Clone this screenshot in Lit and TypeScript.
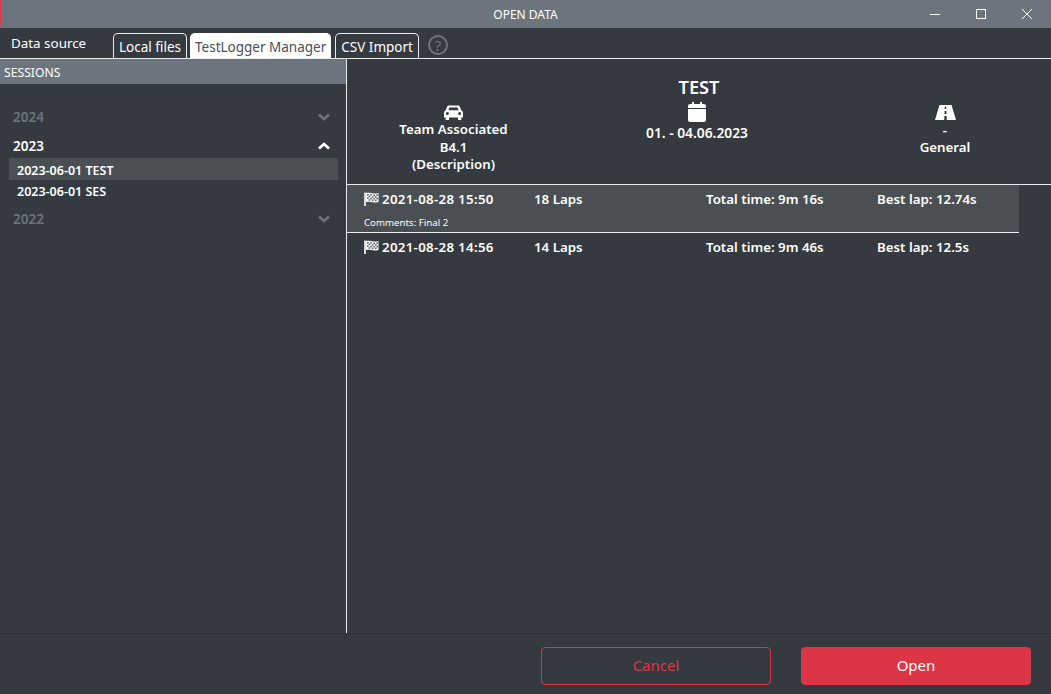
import { LitElement, html, css, svg } from "lit";
import { customElement } from "lit/decorators.js";

const chevDown = svg`<path d="M2 4.5 L7 9 L12 4.5" fill="none" stroke="currentColor" stroke-width="2.6"/>`;
const chevUp = svg`<path d="M2 9.5 L7 5 L12 9.5" fill="none" stroke="currentColor" stroke-width="2.6"/>`;

@customElement("app-root")
export class AppRoot extends LitElement {
  static styles = css`
    :host { display: flex; flex-direction: column; width: 1051px; height: 694px; background: #343a40; color: #fff; font-family: "Noto Sans", "Open Sans", sans-serif; overflow: hidden; position: relative; }
    .title { height: 28px; background: #6c757d; display: flex; align-items: center; justify-content: center; font-size: 12px; position: relative; flex: none; }
    .accent { position: absolute; left: 0; top: 0; width: 1px; height: 26px; background: #dc3545; }
    .winbtns { position: absolute; right: 1px; top: 0; height: 28px; display: flex; }
    .winbtn { width: 46px; height: 28px; display: flex; align-items: center; justify-content: center; }
    .tabs { height: 30px; flex: none; display: flex; align-items: flex-end; border-bottom: 1px solid #e9ecef; box-sizing: content-box; position: relative; }
    .ds { font-size: 13.4px; position: absolute; left: 11px; top: 6px; }
    .tab { height: 25px; box-sizing: border-box; border: 1px solid #e9ecef; border-bottom: none; border-radius: 5px 5px 0 0; font-size: 13.5px; padding: 3px 5px 0; margin-right: 3px; line-height: 20px; white-space: nowrap; }
    .tab.first { margin-left: 113px; }
    .tab.active { background: #fff; color: #495057; border-color: #fff; padding: 3px 4px 0; margin-right: 4px; }
    .help { width: 20px; height: 20px; margin: 0 0 3px 6px; border: 2px solid #6c757d; border-radius: 50%; box-sizing: border-box; color: #6c757d; font-size: 15px; line-height: 16px; text-align: center; }
    .body { flex: 1; display: flex; min-height: 0; }
    .left { width: 346px; flex: none; border-right: 1px solid #e9ecef; display: flex; flex-direction: column; box-sizing: content-box; }
    .sess { height: 25px; background: #6c757d; font-size: 12.2px; line-height: 27px; padding-left: 4px; flex: none; }
    .list { padding: 18px 8px 0 9px; }
    .year { display: flex; justify-content: space-between; align-items: center; font-size: 13.5px; font-weight: 600; height: 29px; padding-left: 4px; padding-right: 7px; }
    .year.dim { color: #6c757d; }
    .item { font-size: 12.5px; font-weight: 600; height: 22px; line-height: 24px; padding-left: 8px; }
    .item.sel { background: #4a4f54; line-height: 26px; }
    .items { margin-top: -2px; margin-bottom: 2px; }
    .right { flex: 1; min-width: 0; }
    .head { height: 125px; border-bottom: 1px solid #e9ecef; display: grid; grid-template-columns: 213px 274px 1fr; box-sizing: content-box; }
    .col { display: flex; flex-direction: column; align-items: center; font-size: 13.3px; font-weight: 600; line-height: 17.5px; text-align: center; }
    .c1 { padding-top: 46px; }
    .c1 .ic { margin-bottom: 0; }
    .c2 { padding-top: 17px; }
    .c2 .ttl { font-size: 18.2px; line-height: 22px; margin-left: 4px; margin-bottom: 4px; }
    .c2 .val { margin-top: 2px; font-size: 13.8px; }
    .c3 { padding-top: 46px; width: 200px; margin-left: 11px; }
    .c3 .dash { line-height: 14px; margin-top: 3px; }
    .c3 .gen { line-height: 18px; margin-top: 1px; }
    .sessions { padding-right: 32px; }
    .run { padding-left: 17px; font-size: 13.3px; font-weight: 600; }
    .run.sel { background: #4a4f54; border-bottom: 1px solid #e9ecef; height: 47px; box-sizing: content-box; }
    .row { display: grid; grid-template-columns: 170px 172px 171px 1fr; height: 28px; align-items: center; }
    .when { display: flex; align-items: center; gap: 3px; letter-spacing: 0.3px; }
    .cm { font-size: 9.7px; font-weight: 400; line-height: 13px; margin-top: 3px; }
    .foot { height: 61px; flex: none; border-top: 1px solid #2c3136; display: flex; justify-content: flex-end; align-items: flex-start; gap: 30px; padding: 13px 20px 0 0; box-sizing: border-box; }
    .btn { width: 230px; height: 38px; padding-bottom: 2px; border-radius: 4px; box-sizing: border-box; font-size: 15px; display: flex; align-items: center; justify-content: center; border: 1px solid #dc3545; }
    .btn.out { color: #dc3545; }
    .btn.solid { background: #dc3545; color: #fff; }
    svg { display: block; }
  `;

  flag() {
    return html`<svg width="15" height="14" viewBox="0 0 15 14"><path d="M1 0.5 V14" stroke="#fff" stroke-width="1.6"/><path d="M2 1 C5 0 8 2.5 14.5 1 V10 C9 11.5 6 9 2 10 Z" fill="#fff"/><g fill="#5b6268"><rect x="3" y="2" width="1.6" height="1.6"/><rect x="6.2" y="2" width="1.6" height="1.6"/><rect x="9.4" y="2.6" width="1.6" height="1.6"/><rect x="12.4" y="2.2" width="1.6" height="1.6"/><rect x="4.6" y="3.7" width="1.6" height="1.6"/><rect x="7.8" y="4.2" width="1.6" height="1.6"/><rect x="11" y="4.2" width="1.6" height="1.6"/><rect x="3" y="5.4" width="1.6" height="1.6"/><rect x="6.2" y="5.8" width="1.6" height="1.6"/><rect x="9.4" y="5.9" width="1.6" height="1.6"/><rect x="12.4" y="5.8" width="1.6" height="1.6"/><rect x="4.6" y="7.2" width="1.6" height="1.6"/><rect x="7.8" y="7.6" width="1.6" height="1.6"/><rect x="11" y="7.6" width="1.6" height="1.6"/></g></svg>`;
  }

  run(when: string, laps: string, total: string, best: string) {
    return html`<div class="row">
      <div class="when">${this.flag()}<span>${when}</span></div>
      <div>${laps}</div><div>${total}</div><div>${best}</div>
    </div>`;
  }

  render() {
    return html`
      <div class="title">
        <div class="accent"></div>
        <span>OPEN DATA</span>
        <div class="winbtns">
          <div class="winbtn"><svg width="10" height="10" viewBox="0 0 10 10"><path d="M0 5.5H10" stroke="#fff"/></svg></div>
          <div class="winbtn"><svg width="10" height="10" viewBox="0 0 10 10"><rect x=".5" y=".5" width="9" height="9" fill="none" stroke="#fff"/></svg></div>
          <div class="winbtn"><svg width="10" height="10" viewBox="0 0 10 10"><path d="M0 0L10 10M10 0L0 10" stroke="#fff" stroke-width="1"/></svg></div>
        </div>
      </div>
      <div class="tabs">
        <div class="ds">Data source</div>
        <div class="tab first">Local files</div>
        <div class="tab active">TestLogger Manager</div>
        <div class="tab">CSV Import</div>
        <div class="help">?</div>
      </div>
      <div class="body">
        <div class="left">
          <div class="sess">SESSIONS</div>
          <div class="list">
            <div class="year dim"><span>2024</span><svg width="14" height="14" viewBox="0 0 14 14">${chevDown}</svg></div>
            <div class="year"><span>2023</span><svg width="14" height="14" viewBox="0 0 14 14">${chevUp}</svg></div>
            <div class="items">
              <div class="item sel">2023-06-01 TEST</div>
              <div class="item">2023-06-01 SES</div>
            </div>
            <div class="year dim"><span>2022</span><svg width="14" height="14" viewBox="0 0 14 14">${chevDown}</svg></div>
          </div>
        </div>
        <div class="right">
          <div class="head">
            <div class="col c1">
              <svg class="ic" width="19" height="16" viewBox="0 0 19 16"><path fill="#fff" fill-rule="evenodd" d="M5 0.5 H14 C15 0.5 15.6 1 16 2 L17.2 5.3 C18.3 5.8 19 6.7 19 8 V12.5 H17.3 V15 H14 V12.5 H5 V15 H1.7 V12.5 H0 V8 C0 6.7 0.7 5.8 1.8 5.3 L3 2 C3.4 1 4 0.5 5 0.5 Z M5.4 2.6 L4.4 5.2 H14.6 L13.6 2.6 Z M3.4 7 A1.5 1.5 0 1 0 3.4 10 A1.5 1.5 0 1 0 3.4 7 Z M15.6 7 A1.5 1.5 0 1 0 15.6 10 A1.5 1.5 0 1 0 15.6 7 Z"/></svg>
              <div>Team Associated</div><div>B4.1</div><div>(Description)</div>
            </div>
            <div class="col c2">
              <div class="ttl">TEST</div>
              <svg width="18" height="20" viewBox="0 0 18 20"><path fill="#fff" d="M4 0 H6 V2 H12 V0 H14 V2 H16 A2 2 0 0 1 18 4 V6 H0 V4 A2 2 0 0 1 2 2 H4 Z M0 7 H18 V18 A2 2 0 0 1 16 20 H2 A2 2 0 0 1 0 18 Z"/></svg>
              <div class="val">01. - 04.06.2023</div>
            </div>
            <div class="col c3">
              <svg width="21" height="15" viewBox="0 0 21 15"><path fill="#fff" fill-rule="evenodd" d="M4.5 0 H16.5 L21 15 H0 Z M9.8 1.5 L9.7 4 H11.3 L11.2 1.5 Z M9.6 6 L9.5 9 H11.5 L11.4 6 Z M9.4 11 L9.2 15 H11.8 L11.6 11 Z"/></svg>
              <div class="dash">-</div>
              <div class="gen">General</div>
            </div>
          </div>
          <div class="sessions">
            <div class="run sel">
              ${this.run("2021-08-28 15:50", "18 Laps", "Total time: 9m 16s", "Best lap: 12.74s")}
              <div class="cm">Comments: Final 2</div>
            </div>
            <div class="run">
              ${this.run("2021-08-28 14:56", "14 Laps", "Total time: 9m 46s", "Best lap: 12.5s")}
            </div>
          </div>
        </div>
      </div>
      <div class="foot">
        <div class="btn out">Cancel</div>
        <div class="btn solid">Open</div>
      </div>
    `;
  }
}
